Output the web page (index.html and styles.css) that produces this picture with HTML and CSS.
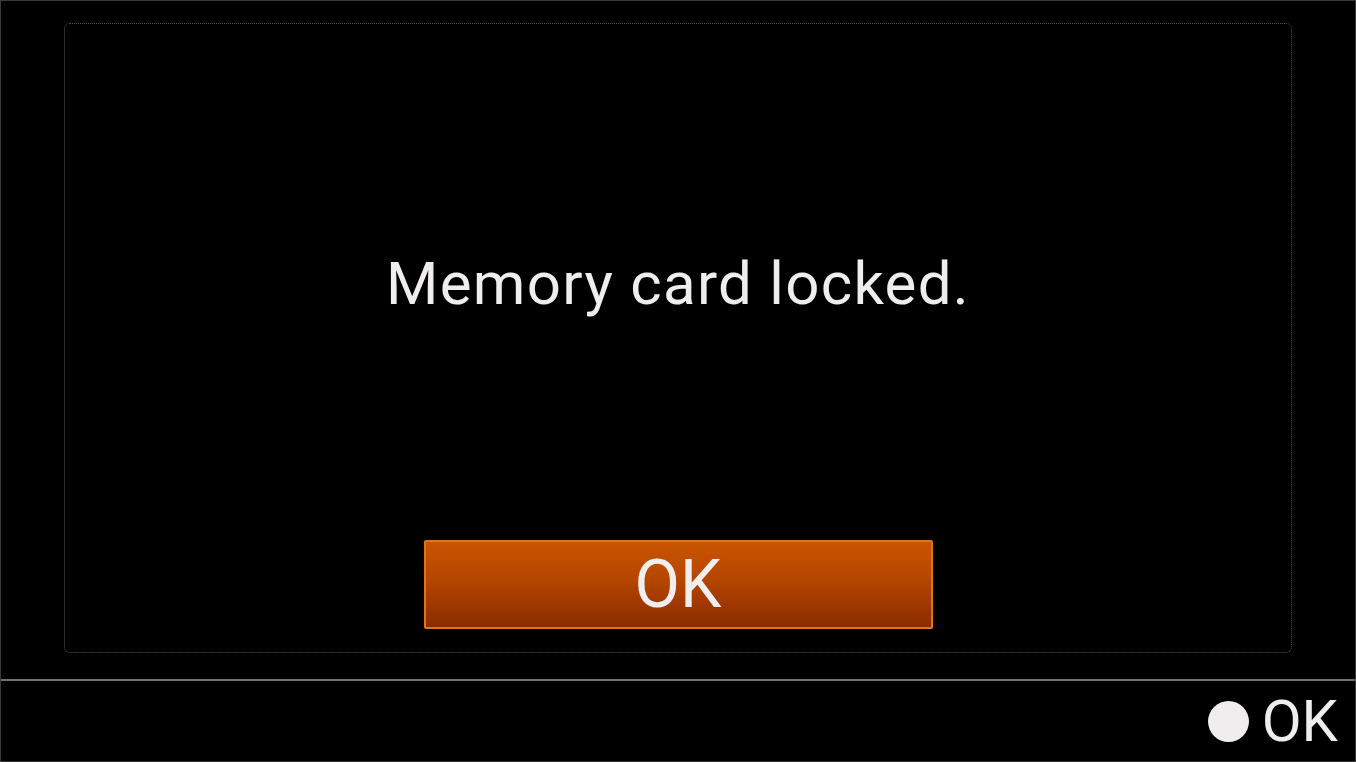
FILE: index.html
```html
<!DOCTYPE html>
<html>
<head>
<meta charset="utf-8">
<link rel="stylesheet" href="styles.css">
</head>
<body>
<div class="screen">
  <div class="panel">
    <p class="message">Memory card locked.</p>
    <div class="button">OK</div>
  </div>
  <div class="footer">
    <span class="dot"></span>
    <span class="hint">OK</span>
  </div>
</div>
</body>
</html>
```
FILE: styles.css
```css
html, body {
  margin: 0;
  padding: 0;
  background: #000;
}
.screen {
  box-sizing: border-box;
  width: 1356px;
  height: 762px;
  border: 1px solid #3a3a3a;
  background: #000;
  display: flex;
  flex-direction: column;
  font-family: Roboto, "Liberation Sans", sans-serif;
  color: #efeded;
}
.panel {
  box-sizing: border-box;
  margin: 22px 0 0 63px;
  width: 1228px;
  height: 630px;
  border: 1px dotted #555;
  border-radius: 6px;
  display: flex;
  flex-direction: column;
  align-items: center;
}
.message {
  margin: 225px 0 0 0;
  font-size: 60px;
  line-height: 70px;
  letter-spacing: 1.3px;
}
.button {
  box-sizing: border-box;
  margin-top: auto;
  margin-bottom: 23px;
  width: 509px;
  height: 89px;
  border: 2px solid #e0731e;
  border-radius: 2px;
  background: linear-gradient(to bottom, #c85400 0%, #b84800 40%, #9a3400 80%, #8a2c00 100%);
  display: flex;
  align-items: center;
  justify-content: center;
  font-size: 66px;
  line-height: 1;
  color: #f0eeee;
}
.footer {
  margin-top: 26px;
  border-top: 2px solid #727272;
  flex: 1;
  display: flex;
  align-items: center;
  justify-content: flex-end;
  padding-right: 17px;
  gap: 13px;
}
.dot {
  width: 41px;
  height: 41px;
  border-radius: 50%;
  background: #efeded;
}
.hint {
  font-size: 58px;
  line-height: 1;
}
```
